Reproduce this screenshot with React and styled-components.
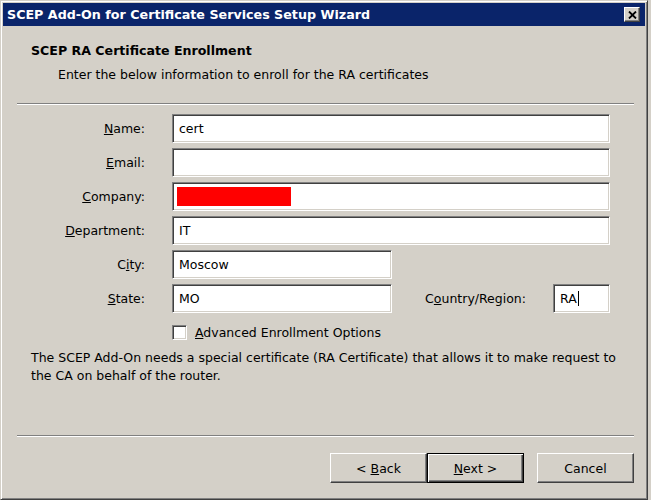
import React from "react";
import styled, { createGlobalStyle, css } from "styled-components";

const GlobalStyle = createGlobalStyle`
  html, body { margin: 0; padding: 0; background: #d4d0c8; }
  body {
    font-family: "DejaVu Sans", "Liberation Sans", sans-serif;
    font-size: 12.5px;
    color: #000;
  }
  * { box-sizing: border-box; }
`;

const Window = styled.div`
  width: 648px;
  height: 500px;
  background: #d4d0c8;
  border: 1px solid;
  border-color: #d4d0c8 #404040 #404040 #d4d0c8;
  box-shadow: inset 1px 1px #ffffff, inset -1px -1px #808080;
  padding: 2px;
  display: flex;
  flex-direction: column;
`;

const TitleBar = styled.div`
  height: 23px;
  background: #0a246a;
  display: flex;
  align-items: center;
  justify-content: space-between;
  padding: 0 5px 0 4px;
`;

const TitleText = styled.div`
  color: #fff;
  font-weight: bold;
  font-size: 12.7px;
  white-space: nowrap;
`;

const raised = css`
  background: #d4d0c8;
  border: 1px solid;
  border-color: #ffffff #404040 #404040 #ffffff;
  box-shadow: inset -1px -1px #808080;
`;

const CloseButton = styled.div`
  ${raised};
  width: 16px;
  height: 15px;
  display: flex;
  align-items: center;
  justify-content: center;
`;

const Header = styled.div`
  padding: 16px 0 19px 28px;
`;

const HeaderTitle = styled.div`
  font-weight: bold;
  font-size: 12.6px;
  line-height: 18px;
`;

const HeaderSub = styled.div`
  margin-top: 6px;
  padding-left: 27px;
  line-height: 18px;
`;

const Separator = styled.div`
  border-top: 1px solid #808080;
  border-bottom: 1px solid #ffffff;
  margin: 0 11px 0 14px;
`;

const Form = styled.div`
  margin-top: 9px;
  padding-left: 17px;
  display: grid;
  grid-template-columns: 125px 220px 107px 57px;
  grid-auto-rows: 29px;
  column-gap: 27px;
  row-gap: 5px;
`;

const Label = styled.div`
  align-self: center;
  text-align: right;
  white-space: nowrap;
  line-height: 18px;
`;

const Key = styled.u`
  text-decoration: underline;
  text-underline-offset: 1px;
`;

const sunken = css`
  background: #ffffff;
  border: 1px solid;
  border-color: #808080 #ffffff #ffffff #808080;
  box-shadow: inset 1px 1px #404040, inset -1px -1px #d4d0c8;
`;

const Field = styled.div`
  ${sunken};
  grid-column: ${(p) => (p.$full ? "2 / -1" : "auto")};
  display: flex;
  align-items: center;
  padding: 0 6px;
  white-space: nowrap;
`;

const Redaction = styled.span`
  display: block;
  width: 114px;
  height: 19px;
  margin-left: -2px;
  background: #ff0000;
`;

const Caret = styled.span`
  display: inline-block;
  width: 1px;
  height: 15px;
  margin-left: 1px;
  background: #000;
`;

const CheckRow = styled.div`
  margin: 12px 0 0 169px;
  height: 15px;
  display: flex;
  align-items: center;
  gap: 8px;
`;

const CheckBox = styled.span`
  ${sunken};
  width: 15px;
  height: 15px;
  flex: none;
`;

const Paragraph = styled.p`
  margin: 9px 0 0 28px;
  max-width: 592px;
  line-height: 18px;
`;

const Footer = styled.div`
  margin-top: auto;
`;

const ButtonRow = styled.div`
  display: flex;
  justify-content: flex-end;
  padding: 16px 11px 14px 0;
`;

const Button = styled.div`
  ${raised};
  width: 97px;
  height: 30px;
  display: flex;
  align-items: center;
  justify-content: center;
  white-space: pre;
  margin-left: ${(p) => p.$gap || 0}px;
  ${(p) =>
    p.$default &&
    css`
      border-color: #000;
      box-shadow: inset 1px 1px #ffffff, inset -1px -1px #404040,
        inset -2px -2px #808080;
    `}
`;

export default function App() {
  return (
    <>
      <GlobalStyle />
      <Window>
        <TitleBar>
          <TitleText>SCEP Add-On for Certificate Services Setup Wizard</TitleText>
          <CloseButton>
            <svg width="9" height="8" viewBox="0 0 9 8">
              <path d="M1 0.5 L8 7.5 M8 0.5 L1 7.5" stroke="#000" strokeWidth="1.8" />
            </svg>
          </CloseButton>
        </TitleBar>
        <Header>
          <HeaderTitle>SCEP RA Certificate Enrollment</HeaderTitle>
          <HeaderSub>Enter the below information to enroll for the RA certificates</HeaderSub>
        </Header>
        <Separator />
        <Form>
          <Label><Key>N</Key>ame:</Label>
          <Field $full>cert</Field>
          <Label><Key>E</Key>mail:</Label>
          <Field $full />
          <Label><Key>C</Key>ompany:</Label>
          <Field $full><Redaction /></Field>
          <Label><Key>D</Key>epartment:</Label>
          <Field $full>IT</Field>
          <Label>C<Key>i</Key>ty:</Label>
          <Field>Moscow</Field>
          <div />
          <div />
          <Label><Key>S</Key>tate:</Label>
          <Field>MO</Field>
          <Label>C<Key>o</Key>untry/Region:</Label>
          <Field>RA<Caret /></Field>
        </Form>
        <CheckRow>
          <CheckBox />
          <span><Key>A</Key>dvanced Enrollment Options</span>
        </CheckRow>
        <Paragraph>
          The SCEP Add-On needs a special certificate (RA Certificate) that allows it to make request to the CA on behalf of the router.
        </Paragraph>
        <Footer>
          <Separator />
          <ButtonRow>
            <Button>{"< "}<Key>B</Key>ack</Button>
            <Button $default><Key>N</Key>{"ext >"}</Button>
            <Button $gap={13}>Cancel</Button>
          </ButtonRow>
        </Footer>
      </Window>
    </>
  );
}
